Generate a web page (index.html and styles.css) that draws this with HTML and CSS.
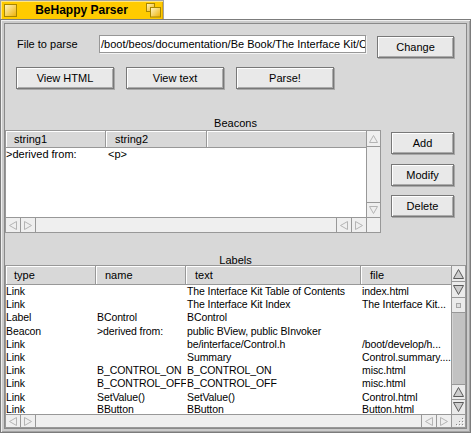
FILE: index.html
```html
<!DOCTYPE html>
<html>
<head>
<meta charset="utf-8">
<link rel="stylesheet" href="styles.css">
</head>
<body>
<div class="tab">
  <svg class="closebox" width="13" height="13" viewBox="0 0 13 13"><defs><linearGradient id="cg" x1="0" y1="0" x2="1" y2="1"><stop offset="0" stop-color="#FFF7C8"/><stop offset="1" stop-color="#EFB000"/></linearGradient></defs><rect x="0.5" y="0.5" width="12" height="12" fill="url(#cg)" stroke="#A88600"/></svg>
  <span class="title">BeHappy Parser</span>
  <svg class="zoombox" width="16" height="15" viewBox="0 0 16 15"><defs><linearGradient id="zg" x1="0" y1="0" x2="1" y2="1"><stop offset="0" stop-color="#FFF7C8"/><stop offset="1" stop-color="#EFB000"/></linearGradient></defs><rect x="0.5" y="0.5" width="8" height="8" fill="url(#zg)" stroke="#A88600"/><rect x="4.5" y="4.5" width="10" height="9.5" fill="url(#zg)" stroke="#A88600"/></svg>
</div>
<div class="frame">
  <div class="content">
    <div class="row1">
      <span class="lbl">File to parse</span>
      <div class="field">/boot/beos/documentation/Be Book/The Interface Kit/C</div>
      <div class="btn change">Change</div>
    </div>
    <div class="row2">
      <div class="btn wide">View HTML</div>
      <div class="btn wide">View text</div>
      <div class="btn wide">Parse!</div>
    </div>
    <div class="sect beacons-title">Beacons</div>
    <div class="mid">
      <div class="sv beacons">
        <div class="main">
          <div class="hdr"><span class="hc">string1</span><span class="hc">string2</span><span class="hc"></span></div>
          <div class="row"><span>&gt;derived from:</span><span>&lt;p&gt;</span><span></span></div>
        </div>
        <div class="vs">
          <div class="arr t"><svg width="9" height="8" viewBox="0 0 9 8"><polygon points="4.5,0.5 8.5,7.5 0.5,7.5" class="dis"/></svg></div>
          <div class="track"></div>
          <div class="arr b"><svg width="9" height="8" viewBox="0 0 9 8"><polygon points="0.5,0.5 8.5,0.5 4.5,7.5" class="dis"/></svg></div>
        </div>
        <div class="hs">
          <div class="arr l"><svg width="8" height="9" viewBox="0 0 8 9"><polygon points="0.5,4.5 7.5,0.5 7.5,8.5" class="dis"/></svg></div>
          <div class="arr l"><svg width="8" height="9" viewBox="0 0 8 9"><polygon points="7.5,4.5 0.5,0.5 0.5,8.5" class="dis"/></svg></div>
          <div class="track"></div>
          <div class="arr r"><svg width="8" height="9" viewBox="0 0 8 9"><polygon points="0.5,4.5 7.5,0.5 7.5,8.5" class="dis"/></svg></div>
          <div class="arr r"><svg width="8" height="9" viewBox="0 0 8 9"><polygon points="7.5,4.5 0.5,0.5 0.5,8.5" class="dis"/></svg></div>
        </div>
        <div class="corner"></div>
      </div>
      <div class="side">
        <div class="btn sb add">Add</div>
        <div class="btn sb modify">Modify</div>
        <div class="btn sb delete">Delete</div>
      </div>
    </div>
    <div class="sect labels-title">Labels</div>
    <div class="sv labels">
      <div class="main">
        <div class="hdr"><span class="hc">type</span><span class="hc">name</span><span class="hc">text</span><span class="hc">file</span></div>
        <div class="row"><span>Link</span><span></span><span>The Interface Kit Table of Contents</span><span>index.html</span></div>
        <div class="row"><span>Link</span><span></span><span>The Interface Kit Index</span><span>The Interface Kit...</span></div>
        <div class="row"><span>Label</span><span>BControl</span><span>BControl</span><span></span></div>
        <div class="row"><span>Beacon</span><span>&gt;derived from:</span><span>public BView, public BInvoker</span><span></span></div>
        <div class="row"><span>Link</span><span></span><span>be/interface/Control.h</span><span>/boot/develop/h...</span></div>
        <div class="row"><span>Link</span><span></span><span>Summary</span><span>Control.summary....</span></div>
        <div class="row"><span>Link</span><span>B_CONTROL_ON</span><span>B_CONTROL_ON</span><span>misc.html</span></div>
        <div class="row"><span>Link</span><span>B_CONTROL_OFF</span><span>B_CONTROL_OFF</span><span>misc.html</span></div>
        <div class="row"><span>Link</span><span>SetValue()</span><span>SetValue()</span><span>Control.html</span></div>
        <div class="row last"><span>Link</span><span>BButton</span><span>BButton</span><span>Button.html</span></div>
      </div>
      <div class="vs en">
        <div class="arr t"><svg width="11" height="10" viewBox="0 0 11 10"><polygon points="5.5,0.5 10.5,9.5 0.5,9.5" class="on"/></svg></div>
        <div class="arr t"><svg width="11" height="10" viewBox="0 0 11 10"><polygon points="0.5,0.5 10.5,0.5 5.5,9.5" class="on"/></svg></div>
        <div class="thumb"><span class="knob"></span></div>
        <div class="track dark"></div>
        <div class="arr b"><svg width="11" height="10" viewBox="0 0 11 10"><polygon points="5.5,0.5 10.5,9.5 0.5,9.5" class="on"/></svg></div>
        <div class="arr b"><svg width="11" height="10" viewBox="0 0 11 10"><polygon points="0.5,0.5 10.5,0.5 5.5,9.5" class="on"/></svg></div>
      </div>
      <div class="hs">
        <div class="arr l"><svg width="8" height="9" viewBox="0 0 8 9"><polygon points="0.5,4.5 7.5,0.5 7.5,8.5" class="dis"/></svg></div>
        <div class="arr l"><svg width="8" height="9" viewBox="0 0 8 9"><polygon points="7.5,4.5 0.5,0.5 0.5,8.5" class="dis"/></svg></div>
        <div class="track"></div>
        <div class="arr r"><svg width="8" height="9" viewBox="0 0 8 9"><polygon points="0.5,4.5 7.5,0.5 7.5,8.5" class="dis"/></svg></div>
        <div class="arr r"><svg width="8" height="9" viewBox="0 0 8 9"><polygon points="7.5,4.5 0.5,0.5 0.5,8.5" class="dis"/></svg></div>
      </div>
      <div class="corner grip"><svg width="13" height="12" viewBox="0 0 13 12"><g fill="#8a8a8a"><rect x="10" y="3" width="1" height="1"/><rect x="7" y="6" width="1" height="1"/><rect x="10" y="6" width="1" height="1"/><rect x="4" y="9" width="1" height="1"/><rect x="7" y="9" width="1" height="1"/><rect x="10" y="9" width="1" height="1"/></g><g fill="#ffffff"><rect x="11" y="4" width="1" height="1"/><rect x="8" y="7" width="1" height="1"/><rect x="11" y="7" width="1" height="1"/><rect x="5" y="10" width="1" height="1"/><rect x="8" y="10" width="1" height="1"/><rect x="11" y="10" width="1" height="1"/></g></svg></div>
    </div>
  </div>
</div>
</body>
</html>
```

FILE: styles.css
```css
* { box-sizing: border-box; }
html, body { margin: 0; padding: 0; background: #ffffff; }
body {
  font-family: "Liberation Sans", Arial, sans-serif;
  font-size: 11px;
  color: #000;
  width: 471px;
  height: 433px;
  overflow: hidden;
}

/* title tab */
.tab {
  width: 164px;
  height: 19px;
  background: #FFCB00;
  border: 1px solid #a4a4a4;
  border-bottom: none;
  box-shadow: inset 1px 1px 0 #FFE680, inset -1px 0 0 #E0A800;
  display: flex;
  align-items: center;
}
.closebox { margin-left: 3px; flex: none; display: block; }
.title {
  flex: 1;
  text-align: center;
  font-weight: bold;
  font-size: 12px;
  line-height: 18px;
}
.zoombox { margin-right: 1px; flex: none; display: block; }

/* window frame */
.frame {
  width: 471px;
  height: 414px;
  border: 1px solid #7c7c7c;
  background: #cbcbcb;
  padding: 3px;
  box-shadow: inset 1px 1px 0 #efefef, inset -1px -1px 0 #a4a4a4;
}
.content {
  height: 100%;
  border: 1px solid #8a8a8a;
  background: #d8d8d8;
  display: flex;
  flex-direction: column;
}

/* controls */
.btn {
  height: 22px;
  background: #e9e9e9;
  border: 1px solid #787878;
  box-shadow: inset 1px 1px 0 #ffffff, inset -1px -1px 0 #ababab, 1px 1px 0 #a8a8a8;
  display: flex;
  align-items: center;
  justify-content: center;
  flex: none;
}
.row1 {
  display: flex;
  align-items: flex-start;
  margin-top: 11px;
  height: 24px;
  flex: none;
}
.lbl {
  width: 94px;
  padding-left: 12px;
  line-height: 18px;
  flex: none;
}
.field {
  width: 267px;
  height: 18px;
  flex: none;
  background: #fff;
  border: 1px solid #979797;
  box-shadow: 1px 1px 0 #f4f4f4;
  padding-left: 1px;
  line-height: 16px;
  white-space: nowrap;
  overflow: hidden;
}
.change { width: 77px; margin-left: 11px; margin-top: 1px; }
.row2 {
  display: flex;
  gap: 12px;
  padding-left: 11px;
  margin-top: 8px;
  flex: none;
}
.wide { width: 98px; }

.sect { text-align: center; flex: none; }
.beacons-title { margin-top: 27px; height: 14px; line-height: 14px; }
.labels-title { height: 32px; padding-top: 23px; line-height: 9px; }

.mid { display: flex; height: 103px; flex: none; align-items: flex-start; }
.side { display: flex; flex-direction: column; width: 63px; margin-left: 10px; }
.sb { width: 63px; }
.add { margin-top: 2px; }
.modify { margin-top: 10px; }
.delete { margin-top: 9px; }

/* scroll views */
.sv {
  background: #fff;
  border: 1px solid #989898;
  display: grid;
  grid-template-columns: 1fr 14px;
  flex: none;
}
.beacons { width: 376px; height: 103px; grid-template-rows: 1fr 15px; }
.labels { width: 461px; height: 163px; grid-template-rows: 1fr 13px; }

.main { overflow: hidden; min-width: 0; min-height: 0; display: flex; flex-direction: column; }
.hdr {
  display: grid;
  background: #d8d8d8;
  border-bottom: 1px solid #989898;
  flex: none;
}
.beacons .hdr { height: 17px; grid-template-columns: 100px 101px 1fr; }
.labels .hdr { height: 19px; grid-template-columns: 90px 90px 175px 1fr; }
.hc {
  border-right: 1px solid #989898;
  box-shadow: inset 1px 1px 0 #ffffff;
  padding-left: 9px;
  display: flex;
  align-items: center;
  white-space: nowrap;
  overflow: hidden;
}
.hc:first-child { padding-left: 8px; }
.hc:last-child { border-right: none; }

.row { display: grid; white-space: nowrap; flex: none; }
.row > span { overflow: hidden; padding-left: 1px; }
.row > span:first-child { padding-left: 0; }
.beacons .row { grid-template-columns: 100px 101px 1fr; height: 13px; line-height: 13px; }
.beacons .row > span:nth-child(2) { padding-left: 2px; }
.labels .row {
  grid-template-columns: 90px 90px 175px 1fr;
  height: 13.2px;
  line-height: 12px;
  font-size: 10.5px;
  letter-spacing: -0.1px;
}
.labels .row.last { height: 10px; line-height: 10px; }

.vs {
  border-left: 1px solid #989898;
  display: flex;
  flex-direction: column;
  background: #efefef;
}
.arr {
  flex: none;
  display: flex;
  align-items: center;
  justify-content: center;
  background: #efefef;
}
.arr svg { display: block; }
.vs .arr { height: 15px; }
.vs .arr.t { height: 16px; border-bottom: 1px solid #989898; }
.vs .arr.b { border-top: 1px solid #989898; }
.track { flex: 1; }
.track.dark { background: #c2c2c2; box-shadow: inset 1px 0 0 #d4d4d4; }
.en .arr { background: #ebebeb; }
.thumb {
  height: 15px;
  flex: none;
  background: #ebebeb;
  border-bottom: 1px solid #989898;
  display: flex;
  align-items: center;
  justify-content: center;
}
.knob {
  width: 5px;
  height: 5px;
  border: 1px solid #a6a6a6;
  background: #dedede;
}

.hs {
  border-top: 1px solid #989898;
  display: flex;
  background: #efefef;
}
.hs .arr { width: 15px; }
.hs .arr.l { border-right: 1px solid #989898; }
.hs .arr.r { border-left: 1px solid #989898; }
.corner {
  border-top: 1px solid #989898;
  border-left: 1px solid #989898;
  background: #efefef;
}
.grip { background: #e8e8e8; }
.grip svg { display: block; }

.dis { fill: #efefef; stroke: #b4b4b4; stroke-width: 1; }
.on { fill: #cdcdcd; stroke: #5a5a5a; stroke-width: 1; }
```
